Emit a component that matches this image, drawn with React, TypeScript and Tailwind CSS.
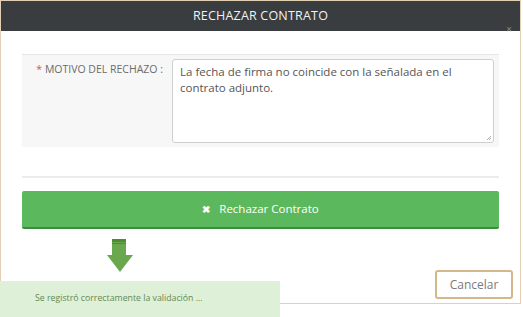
import React from "react";

export default function App() {
  return (
    <div className="relative w-[523px] h-[317px] bg-white overflow-hidden" style={{ fontFamily: '"Open Sans", "Liberation Sans", sans-serif' }}>
      <div className="relative w-[521px] h-[304px] border border-[#e3cfb3] bg-white flex flex-col">
        <div className="h-[30px] bg-[#393d40] flex items-center justify-center text-[#f2f2f2] text-[12.5px] tracking-[0.2px]">
          RECHAZAR CONTRATO
        </div>
        <div className="absolute right-[8px] top-[23px] text-[#8a8a8a] text-[10px] leading-none">×</div>
        <div className="px-[21px] pt-[23px]">
          <div className="bg-[#f7f7f7] border-t border-[#e6e6e6] h-[93px] flex pt-[4px]">
            <div className="w-[150px] pr-[9px] pt-[2px] text-right text-[10.5px] text-[#6b6b6b] leading-[16px]">
              <span className="text-[#e05050]">* </span>MOTIVO DEL RECHAZO :
            </div>
            <div className="w-[322px] h-[84px] bg-white border border-[#cfcfcf] rounded-[3px] px-[7px] pt-[4px] text-[11.5px] leading-[16px] text-[#555] relative">
              La fecha de firma no coincide con la señalada en el contrato adjunto.
              <svg className="absolute right-[1px] bottom-[1px]" width="6" height="6" viewBox="0 0 6 6">
                <path d="M5 1 L1 5 M5 3 L3 5" stroke="#999" strokeWidth="0.8" />
              </svg>
            </div>
          </div>
          <div className="mt-[29px] h-[2px] bg-[#ebebeb]" />
          <div className="mt-[13px] h-[38px] bg-[#5cb85c] border-b-2 border-[#3d8b3d] rounded-[2px] flex items-center justify-center gap-[9px] text-white text-[11.5px]">
            <span className="text-[10px] font-bold">✖</span>
            <span>Rechazar Contrato</span>
          </div>
        </div>
        <div className="flex-1 flex items-end justify-end pr-[7px] pb-[4px]">
          <div className="w-[78px] h-[29px] border-2 border-[#d4b88c] rounded-[3px] flex items-center justify-center text-[12px] text-[#7a7a7a]">
            Cancelar
          </div>
        </div>
      </div>
      <svg className="absolute left-[107px] top-[239px]" width="28" height="34" viewBox="0 0 28 34">
        <rect x="5" y="0" width="14" height="17" fill="#6aa84f" />
        <rect x="5" y="0" width="14" height="3" fill="#4f8a35" />
        <rect x="5" y="4" width="14" height="1" fill="#4f8a35" />
        <polygon points="0,16 26,16 13,33" fill="#6aa84f" />
      </svg>
      <div className="absolute left-0 top-[281px] w-[280px] h-[36px] bg-[#dff0d8] flex items-center pl-[35px] text-[8.75px] text-[#5f8a55]">
        Se registró correctamente la validación ...
      </div>
    </div>
  );
}
